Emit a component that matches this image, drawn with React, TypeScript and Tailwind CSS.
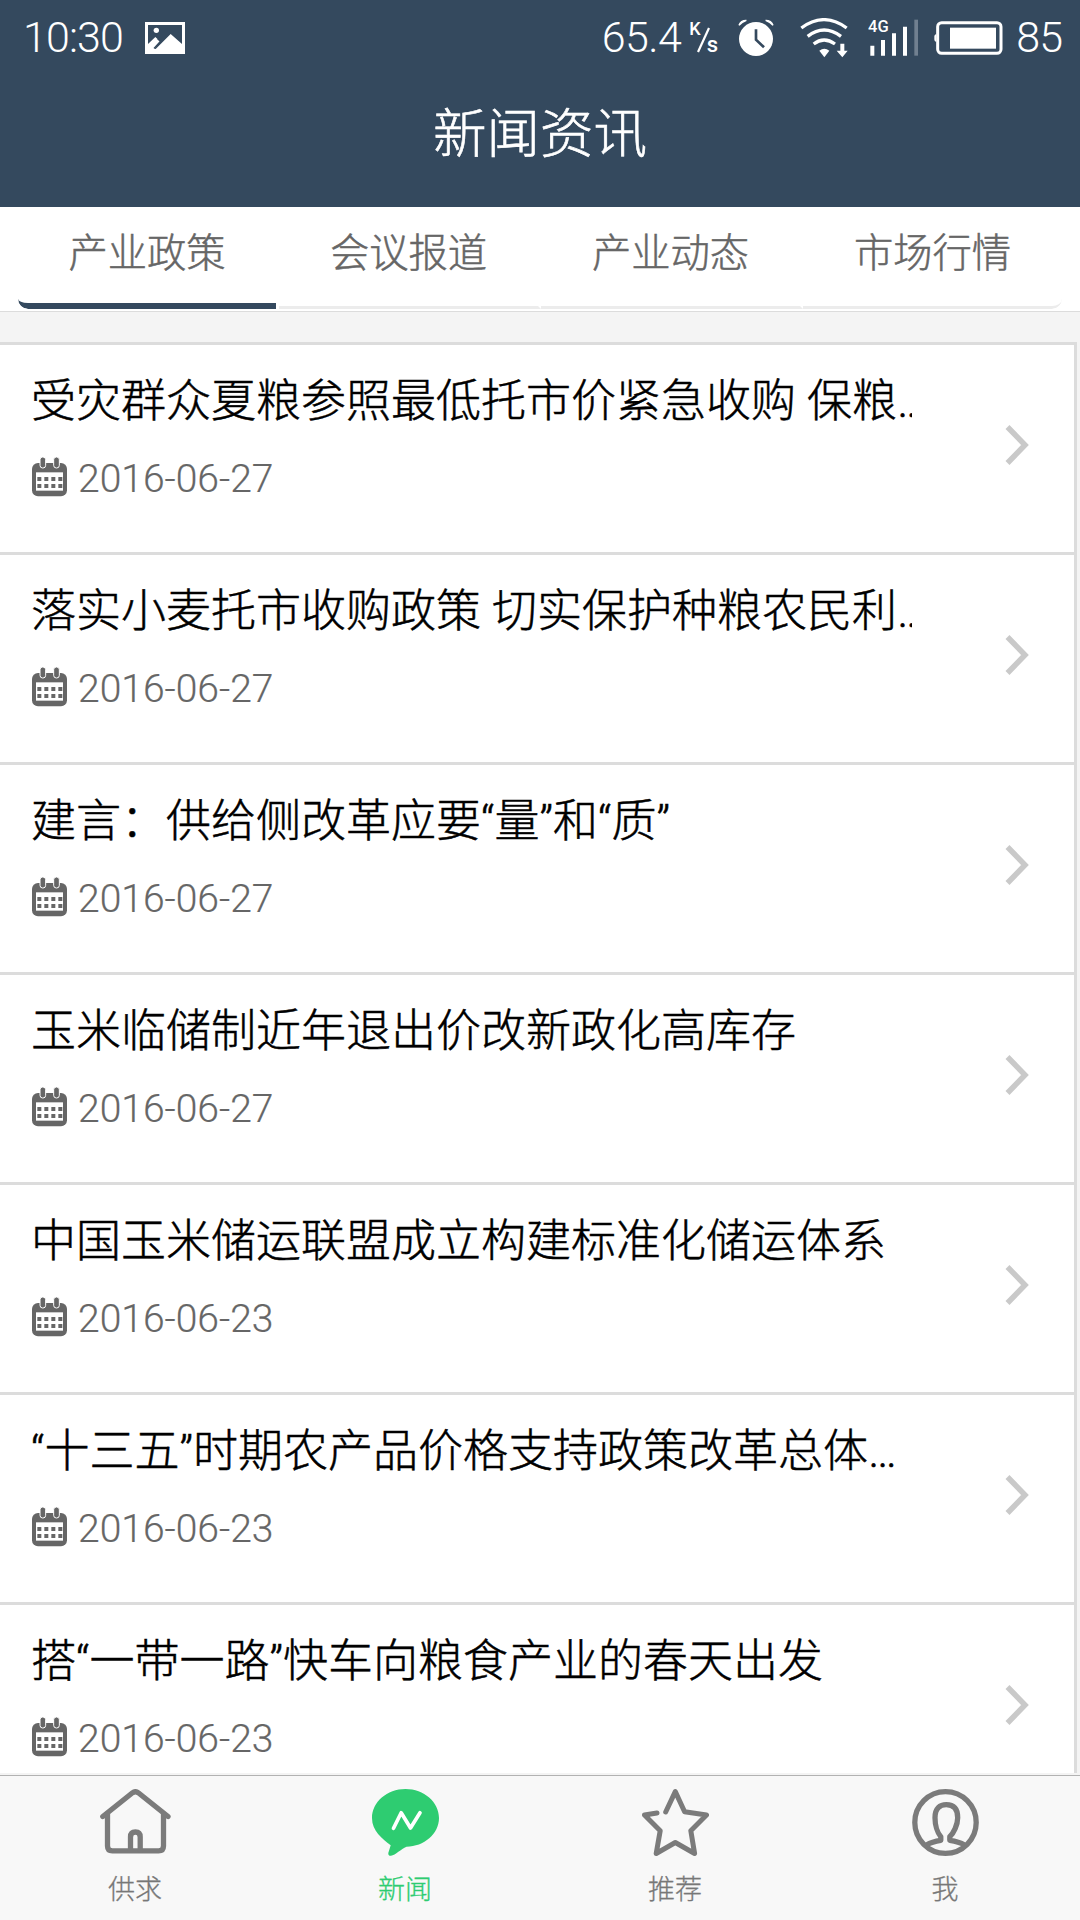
import React from "react";

const news = [
  { title: "受灾群众夏粮参照最低托市价紧急收购 保粮…", date: "2016-06-27" },
  { title: "落实小麦托市收购政策 切实保护种粮农民利…", date: "2016-06-27" },
  { title: "建言：供给侧改革应要“量”和“质”", date: "2016-06-27" },
  { title: "玉米临储制近年退出价改新政化高库存", date: "2016-06-27" },
  { title: "中国玉米储运联盟成立构建标准化储运体系", date: "2016-06-23" },
  { title: "“十三五”时期农产品价格支持政策改革总体…", date: "2016-06-23" },
  { title: "搭“一带一路”快车向粮食产业的春天出发", date: "2016-06-23" },
];

const tabs = ["产业政策", "会议报道", "产业动态", "市场行情"];

function PictureIcon() {
  return (
    <svg className="ml-[23px] h-8 w-10 shrink-0" viewBox="0 0 120 96">
      <path
        fill="#fff"
        fillRule="evenodd"
        d="M0 0H120V96H0ZM9 9V66L31 45L45 58L28 80L32 81L77 36L111 66V9Z"
      />
      <circle cx="34" cy="25" r="8" fill="#fff" />
      <path d="M44 56L27 74" stroke="#fff" strokeWidth="5" />
      <path d="M38 50L46 58L27 79" fill="none" stroke="#34495e" strokeWidth="4" />
    </svg>
  );
}

function AlarmIcon() {
  return (
    <svg className="ml-[20px] h-[38px] w-[36px] shrink-0" viewBox="0 0 108 114">
      <circle cx="54" cy="60" r="51" fill="#fff" />
      <path d="M3 19Q8 4 25 4Q10 10 3 19ZM105 19Q100 4 83 4Q98 10 105 19Z" fill="#fff" stroke="#fff" strokeWidth="4" />
      <path d="M54 31V62L78 85" fill="none" stroke="#34495e" strokeWidth="8" />
    </svg>
  );
}

function WifiIcon() {
  return (
    <svg className="ml-[26px] h-[40px] w-[48px] shrink-0" viewBox="0 0 144 120">
      <g fill="none" stroke="#fff" strokeWidth="10">
        <path d="M4 30Q72 -20 140 30" />
        <path d="M23 55Q72 17 123 55" />
        <path d="M41 78Q72 54 105 78" />
      </g>
      <path d="M58 98Q73 87 88 98L73 118Z" fill="#fff" />
      <path d="M121 77H133V98H143L127 118L110 98H121Z" fill="#fff" />
    </svg>
  );
}

function SignalIcon() {
  return (
    <svg className="ml-[20px] h-[40px] w-[52px] shrink-0" viewBox="0 0 156 120">
      <text x="0" y="41" fill="#fff" fontSize="47" fontFamily="Roboto, sans-serif" fontWeight="500" textLength="62" lengthAdjust="spacingAndGlyphs">
        4G
      </text>
      <path d="M7 83H19V113H7ZM39 66H51V113H39ZM72 46H84V113H72ZM105 26H117V113H105Z" fill="#fff" />
      <path d="M139 5H150V113H139Z" fill="#718090" />
    </svg>
  );
}

function BatteryIcon() {
  return (
    <svg className="ml-[14px] h-[34px] w-[69px] shrink-0" viewBox="0 0 207 102">
      <rect x="11" y="5" width="190" height="92" rx="12" fill="none" stroke="#fff" strokeWidth="9" />
      <rect x="48" y="20" width="138" height="63" fill="#fff" />
      <path d="M7 40Q0 40 1 51Q0 62 7 62Z" fill="#fff" />
    </svg>
  );
}

function StatusBar() {
  return (
    <div className="flex h-[75px] items-center text-[43px] leading-[75px]">
      <span className="ml-[23px] w-[99px] tracking-[-0.9px]">10:30</span>
      <PictureIcon />
      <div className="ml-auto flex items-center pr-[18px]">
        <span className="tracking-[-0.6px]">65.4</span>
        <span className="ml-[8px] flex h-[34px] w-[29px] items-start font-normal">
          <span className="text-[18px] font-medium leading-[16px]">K</span>
          <svg className="-ml-[4px] mt-[6px] h-[26px] w-[13px] shrink-0" viewBox="0 0 13 26">
            <path d="M1 25L12 1" stroke="#fff" strokeWidth="2.2" />
          </svg>
          <span className="-ml-[3px] mt-[15px] text-[22px] font-medium leading-[18px]">s</span>
        </span>
        <AlarmIcon />
        <WifiIcon />
        <SignalIcon />
        <BatteryIcon />
        <span className="ml-[13px] tracking-[-1px]">85</span>
      </div>
    </div>
  );
}

function CalendarIcon() {
  return (
    <svg className="-mt-[5px] h-[40px] w-[35px] shrink-0" viewBox="0 0 105 120">
      <rect x="0" y="18" width="105" height="100" rx="18" fill="#666" />
      <rect x="12" y="46" width="81" height="55" fill="#fff" />
      <path
        d="M16 60h12v12h-12zM37 60h12v12h-12zM58 60h12v12h-12zM79 60h12v12h-12zM16 81h12v12h-12zM37 81h12v12h-12zM58 81h12v12h-12zM79 81h12v12h-12z"
        fill="#666"
      />
      <g fill="#666" stroke="#fff" strokeWidth="3">
        <rect x="24" y="0" width="17" height="33" rx="8" />
        <rect x="65" y="0" width="17" height="33" rx="8" />
      </g>
    </svg>
  );
}

function NewsItem({ title, date }: { title: string; date: string }) {
  return (
    <li className="flex h-[210px] shrink-0 justify-between border-b-[3px] border-[#dcdcdc] pl-[31px] pr-[45px]">
      <div className="w-[881px] overflow-hidden whitespace-nowrap pt-[27px]">
        <h2 className="text-[45px] leading-[60px] text-black [-webkit-text-stroke:0.5px_currentColor]">{title}</h2>
        <div className="mt-[24px] flex h-[46px] items-center pl-[1px] text-[39px] leading-[46px] text-[#666]">
          <CalendarIcon />
          <span className="ml-[11px] [-webkit-text-stroke:0.2px_currentColor]">{date}</span>
        </div>
      </div>
      <svg className="mt-[80px] h-[40px] w-[24px]" viewBox="0 0 24 40">
        <path d="M2.5 2L20 20L2.5 38" fill="none" stroke="#c9c9c9" strokeWidth="5.5" />
      </svg>
    </li>
  );
}

function HomeIcon() {
  return (
    <svg className="h-[68px] w-[73px]" viewBox="0 0 73 68" fill="none" stroke="#7b7b7b" strokeWidth="5.3" strokeLinecap="round" strokeLinejoin="round">
      <path d="M3.8 27.5L33.5 3.8Q36.4 1.6 39.3 3.8L69 27.500" />
      <path d="M8.500 25V57Q8.500 61.900 13.400 61.900H59.600Q64.500 61.900 64.500 57V25" />
      <path d="M31.5 61V48Q31.5 43 36.4 43Q41.2 43 41.2 48V61" />
    </svg>
  );
}

function BubbleIcon() {
  return (
    <svg className="h-[68px] w-[67px]" viewBox="0 0 67 68">
      <path
        d="M33.5 0C52 0 67 13 67 29C67 45 52 57.5 34.5 57.7C29 60 23.5 66 19 66.8Q16 67 16.3 64L18.7 56.3C10 49.500 0 42 0 29C0 13 15 0 33.5 0Z"
        fill="#2ecc71"
      />
      <path d="M21.500 39.300L29.200 23.800L38.500 39L48 23.800" fill="none" stroke="#fff" strokeWidth="3.7" strokeLinecap="round" strokeLinejoin="round" />
    </svg>
  );
}

function StarIcon() {
  return (
    <svg className="h-[68px] w-[67px]" viewBox="0 0 67 68" fill="none" stroke="#7b7b7b" strokeWidth="5" strokeLinecap="round" strokeLinejoin="round">
      <path d="M15 24L2.500 26L18.200 41.700L14.200 64.500L33.300 53.500L52.600 64.500L48.800 41.700L64.500 26L42.600 22.700L33.300 2.600L23.700 23" />
    </svg>
  );
}

function PersonIcon() {
  return (
    <svg className="h-[68px] w-[67px]" viewBox="0 0 67 68" fill="none" stroke="#7b7b7b" strokeWidth="5.3" strokeLinejoin="round">
      <ellipse cx="33.500" cy="33.500" rx="30.700" ry="30.800" />
      <path d="M14.500 56Q20 52.500 28.800 51.300V47.700C25.500 44 23 36 23 28.700C23 19 28 15.700 34.300 15.700C41 15.700 45.700 19 45.700 28.700C45.700 36 41.500 44 37.800 47.700V51.300Q47 52.500 52.500 56" />
    </svg>
  );
}

const nav = [
  { label: "供求", icon: <HomeIcon />, active: false },
  { label: "新闻", icon: <BubbleIcon />, active: true },
  { label: "推荐", icon: <StarIcon />, active: false },
  { label: "我", icon: <PersonIcon />, active: false },
];

export default function App() {
  return (
    <div className="flex h-[1920px] w-[1080px] flex-col overflow-hidden bg-[#f4f4f4] font-[Roboto,'Noto_Sans_CJK_SC',sans-serif] font-light">
      <header className="h-[207px] shrink-0 bg-[#34495e] text-white">
        <StatusBar />
        <h1 className="pt-[24px] text-center text-[53.5px] leading-[72px] [-webkit-text-stroke:0.6px_currentColor]">新闻资讯</h1>
      </header>

      <nav className="h-[105px] shrink-0 border-b border-[#dcdcdc] bg-white pl-[18px] pr-[18px]">
        <div className="grid h-[102px] grid-cols-[261px_262px_262px_259px] overflow-hidden rounded-b-[10px]">
          {tabs.map((tab, i) => (
            <button
              key={tab}
              className={
                i === 0
                  ? "mr-[3px] flex justify-center rounded-bl-[10px] border-b-[6px] border-b-[#34495e] pt-[17px] text-[39.3px] leading-[60px] text-[#666] [-webkit-text-stroke:0.5px_currentColor]"
                  : i === 3
                    ? "flex justify-center rounded-br-[10px] border-b-[3px] border-b-[#ececec] pt-[17px] text-[39.3px] leading-[60px] text-[#666] [-webkit-text-stroke:0.5px_currentColor]"
                    : "flex justify-center border-b-[3px] border-r-[3px] border-b-[#ececec] border-r-transparent pt-[17px] text-[39.3px] leading-[60px] text-[#666] [-webkit-text-stroke:0.5px_currentColor]"
              }
            >
              {tab}
            </button>
          ))}
        </div>
      </nav>

      <main className="mt-[30px] h-[1431px] shrink-0 overflow-hidden pr-[3px]">
        <ul className="flex flex-col border-r-[3px] border-t-[3px] border-[#dcdcdc] bg-white">
          {news.map((item) => (
            <NewsItem key={item.title} title={item.title} date={item.date} />
          ))}
        </ul>
      </main>

      <footer className="mt-[2px] grid h-[145px] shrink-0 grid-cols-4 border-t border-[#b2b2b2] bg-[#f8f8f8]">
        {nav.map((item) => (
          <a
            key={item.label}
            className={
              item.active
                ? "flex flex-col items-center pt-[13px] text-[27px] leading-[36px] text-[#2ecc71] [-webkit-text-stroke:0.3px_currentColor]"
                : "flex flex-col items-center pt-[13px] text-[27px] leading-[36px] text-[#777] [-webkit-text-stroke:0.3px_currentColor]"
            }
          >
            {item.icon}
            <span className="mt-[15px]">{item.label}</span>
          </a>
        ))}
      </footer>
    </div>
  );
}
